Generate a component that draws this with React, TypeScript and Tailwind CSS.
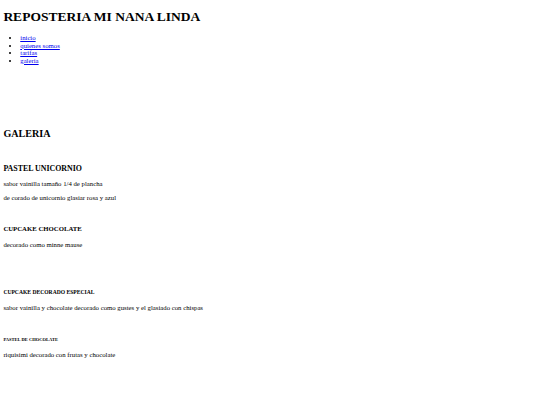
export default function App() {
  const links = ["inicio", "quienes somos", "tarifas", "galeria"];
  return (
    <div className="min-h-screen bg-white px-[3.375px] pt-px font-['Liberation_Serif',serif] text-[6.75px] leading-[normal] text-black">
      <h1 className="mt-[8.05px] mb-[9.05px] text-[13.5px] font-bold">REPOSTERIA MI NANA LINDA</h1>
      <ul className="my-[6.75px] list-disc pl-[16.875px]">
        {links.map((l) => (
          <li key={l} className="leading-[7.6px]">
            <a href="#" className="text-[#0000ee] underline">
              {l}
            </a>
          </li>
        ))}
      </ul>
      <h2 className="mt-[63.1px] mb-[8.4px] text-[10.125px] font-bold">GALERIA</h2>
      <h3 className="mt-[25.8px] mb-[6.9px] text-[7.9px] font-bold">PASTEL UNICORNIO</h3>
      <p className="my-[6.75px]">sabor vainilla tamaño 1/4 de plancha</p>
      <p className="my-[6.75px]">de corado de unicornio glasiar rosa y azul</p>
      <h4 className="mt-[24.4px] mb-[8.6px] text-[6.75px] font-bold">CUPCAKE CHOCOLATE</h4>
      <p className="my-[6.75px]">decorado como minne mause</p>
      <h5 className="mt-[40.6px] mb-[9.36px] text-[5.6px] font-bold">CUPCAKE DECORADO ESPECIAL</h5>
      <p className="my-[6.75px]">sabor vainilla y chocolate decorado como gustes y el glasiado con chispas</p>
      <h6 className="mt-[25.8px] mb-[9.5px] text-[4.52px] font-bold">PASTEL DE CHOCOLATE</h6>
      <p className="my-[6.75px]">riquisimi decorado con frutas y chocolate</p>
    </div>
  );
}
